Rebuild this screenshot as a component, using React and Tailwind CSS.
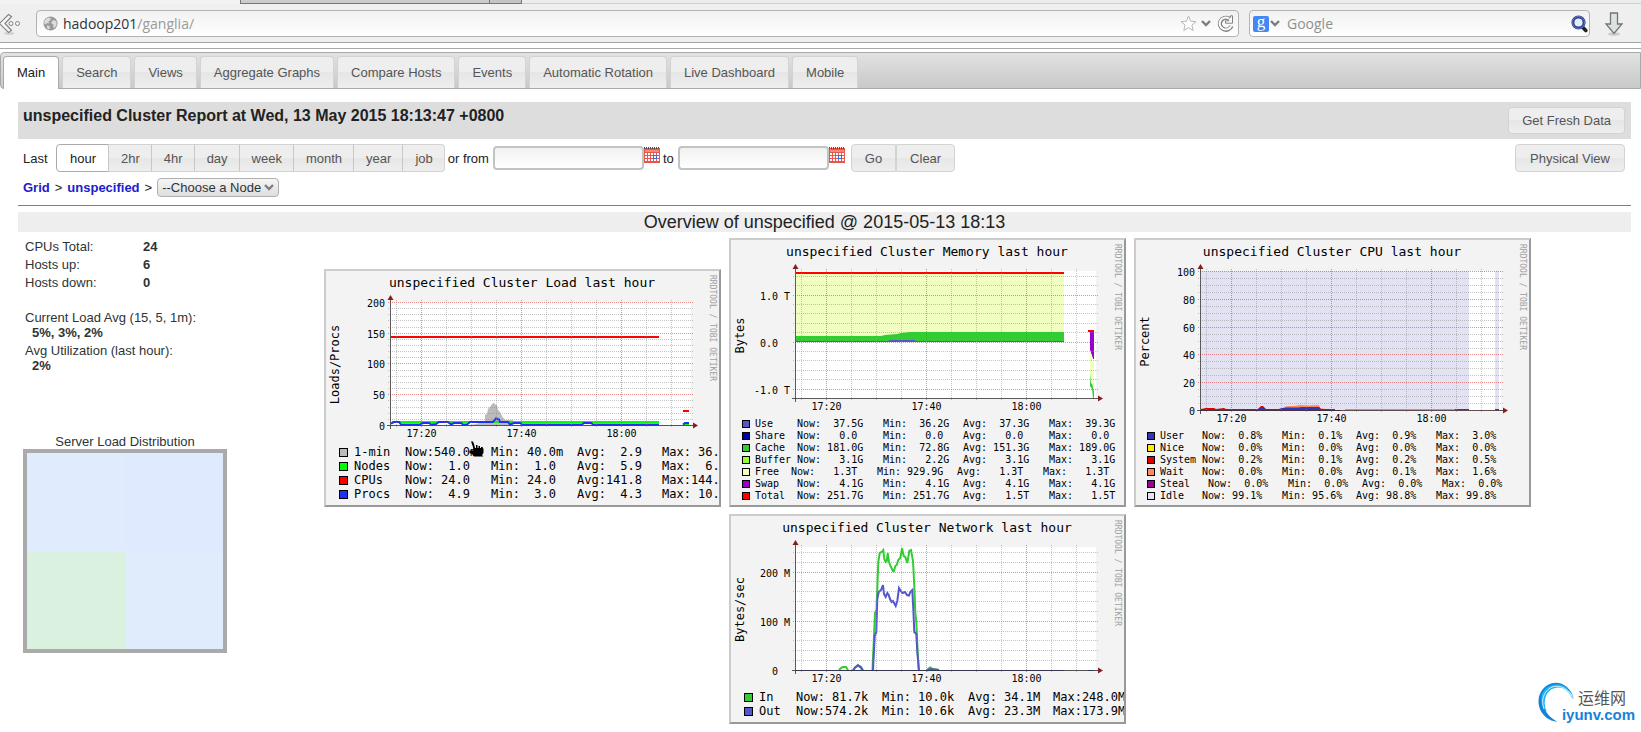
import React from "react";

const TABS = [
  "Main",
  "Search",
  "Views",
  "Aggregate Graphs",
  "Compare Hosts",
  "Events",
  "Automatic Rotation",
  "Live Dashboard",
  "Mobile",
];

const RANGES = ["hour", "2hr", "4hr", "day", "week", "month", "year", "job"];

const X_MINOR = [70.5, 120.5, 145.5, 170.5, 220.5, 245.5, 270.5, 320.5, 345.5];
const X_MAJOR = [
  { x: 95.5, label: "17:20" },
  { x: 195.5, label: "17:40" },
  { x: 295.5, label: "18:00" },
];

const BUTTON =
  "border border-[#d3d3d3] bg-linear-to-b from-[#eeeeee] from-50% via-[#e6e6e6] via-50% to-[#eeeeee] text-[13px] text-[#555555] cursor-pointer";

function GlobeIcon() {
  return (
    <svg width="15" height="15" viewBox="0 0 15 15" className="shrink-0">
      <circle cx="7.5" cy="7.5" r="7" fill="#9a9a9a" />
      <path d="M2 4 L5 1.5 L8 2.5 L7 4.5 L5.5 5.5 L6 7.5 L4 7 L2.5 8.5 L1 7 Z" fill="#dcdcdc" />
      <path d="M8.5 5.5 L11 4 L13.5 5.5 L13.5 9 L11.5 12 L10 11 L10.5 8.5 L8.5 7.5 Z" fill="#dcdcdc" />
      <path d="M4 9.5 L6.5 10 L7 12 L5.5 13.5 L4 12 Z" fill="#dcdcdc" />
    </svg>
  );
}

function BackIcon() {
  return (
    <svg width="21" height="22" viewBox="0 0 21 22" className="shrink-0">
      <ellipse cx="9" cy="20.5" rx="5" ry="1.4" fill="#d2d2d2" />
      <path
        d="M8.5 1.5 L11.5 3.5 L5 10.5 L11.5 17.5 L8.5 19.5 L-0.5 10.5 Z"
        fill="#f7f7f7"
        stroke="#848484"
        strokeWidth="1.2"
      />
      <circle cx="11" cy="10.5" r="2" fill="#f7f7f7" stroke="#848484" />
      <circle cx="17.5" cy="10.5" r="2" fill="#f7f7f7" stroke="#848484" />
    </svg>
  );
}

function StarIcon() {
  return (
    <svg width="17" height="17" viewBox="0 0 17 17">
      <path
        d="M8.5 1 L10.6 6.2 L16 6.6 L11.9 10.1 L13.2 15.6 L8.5 12.6 L3.8 15.6 L5.1 10.1 L1 6.6 L6.4 6.2 Z"
        fill="#fdfdfd"
        stroke="#b9b9b9"
      />
    </svg>
  );
}

function ChevronIcon() {
  return (
    <svg width="10" height="7" viewBox="0 0 10 7">
      <path d="M1 1 L5 5 L9 1" fill="none" stroke="#7d7d7d" strokeWidth="2.4" />
    </svg>
  );
}

function ReloadIcon() {
  return (
    <svg width="17" height="17" viewBox="0 0 17 17">
      <path d="M14.5 11 A6 6 0 1 1 12 3.6" fill="none" stroke="#808080" strokeWidth="4.2" />
      <path d="M15.5 0.8 V8.2 H8.5 V5.8 H12 L11 3.5 L13.4 2.8 V0.8 Z" fill="#ffffff" stroke="#808080" />
      <path d="M14.2 10.8 A6 6 0 1 1 12 3.6" fill="none" stroke="#ffffff" strokeWidth="2" />
    </svg>
  );
}

function MagnifierIcon() {
  return (
    <svg width="17" height="18" viewBox="0 0 17 18">
      <path d="M11 11.5 L14.8 15.5" stroke="#222222" strokeWidth="3.6" strokeLinecap="round" />
      <circle cx="7.5" cy="7.5" r="5.6" fill="#e6ecf8" stroke="#2f3f8f" strokeWidth="3" />
      <circle cx="7.5" cy="7.5" r="6" fill="none" stroke="#6f86cc" strokeWidth="0.8" />
    </svg>
  );
}

function DownloadIcon() {
  return (
    <svg width="20" height="24" viewBox="0 0 20 24">
      <ellipse cx="10" cy="22" rx="6" ry="1.8" fill="#cccccc" />
      <path
        d="M6.5 1 H13.5 V12 H18 L10 21.5 L2 12 H6.5 Z"
        fill="#dde2e2"
        stroke="#727575"
        strokeWidth="1.3"
      />
    </svg>
  );
}

function CalendarIcon() {
  return (
    <svg width="16" height="16" viewBox="0 0 16 16">
      <rect x="0" y="1" width="16" height="15" fill="#e8584a" />
      <path d="M0.5 0 V2 M2.5 0 V2 M4.5 0 V2 M6.5 0 V2 M8.5 0 V2 M10.5 0 V2 M12.5 0 V2 M14.5 0 V2" stroke="#6b4a44" />
      <rect x="1" y="3" width="14" height="2" fill="#f58a7d" />
      {[0, 1, 2].map((row) =>
        [0, 1, 2, 3, 4].map((col) => (
          <rect
            key={`${row}-${col}`}
            x={1 + col * 3}
            y={6 + row * 3}
            width="2"
            height="2"
            fill="#ffffff"
          />
        ))
      )}
      <rect x="9.5" y="8.5" width="3" height="3" fill="#ffffff" stroke="#2f6fe0" />
    </svg>
  );
}

function HandCursor() {
  return (
    <svg
      width="15"
      height="16"
      viewBox="0 0 15 16"
      className="absolute left-[143px] top-[170px]"
    >
      <path
        d="M2 0.5 H4 L5 3 L6 7 H7 V4 H8.5 V7 H9.5 V5 H11 V7 H12 V6 H13.5 L14.5 8 V12 L13 14 L14.5 15.5 H5 L3 13 L0.5 12 V9.5 H4 L4.5 10.5 L4 6 Z"
        fill="#000000"
      />
    </svg>
  );
}

function BrowserBar() {
  return (
    <header className="border-b border-[#a3a3a3] bg-[#efefef]">
      <div className="flex h-1">
        <div className="w-[240px] bg-[#f2f2f2]" />
        <div className="w-[250px] border-x border-b border-[#777777] bg-[#cbcbcb]" />
        <div className="w-[32px] border-r border-b border-[#777777] bg-[#c4c4c4]" />
        <div className="grow border-b border-[#cfcfcf] bg-[#ececec]" />
      </div>
      <div className="flex items-center pt-[6px] pb-[5px] font-['Open_Sans',sans-serif] text-sm">
        <BackIcon />
        <div className="ml-[15px] flex h-[27px] grow items-center rounded border border-[#b3b3b3] bg-linear-to-b from-[#f1f1f1] to-white pr-[2px] pl-[6px]">
          <GlobeIcon />
          <p className="ml-[5px] grow text-[#9a9a9a]">
            <span className="text-[#2e3436]">hadoop201</span>/ganglia/
          </p>
          <button type="button" aria-label="Bookmark" className="mr-1">
            <StarIcon />
          </button>
          <button type="button" aria-label="History" className="mr-[6px]">
            <ChevronIcon />
          </button>
          <button type="button" aria-label="Reload" className="mr-[2px]">
            <ReloadIcon />
          </button>
        </div>
        <div className="ml-[10px] flex h-[27px] w-[341px] items-center rounded border border-[#b3b3b3] bg-linear-to-b from-[#f1f1f1] to-white pr-[1px] pl-[3px]">
          <span className="flex h-4 w-4 items-center justify-center rounded-xs bg-[#4387f5] pb-[3px] font-['Liberation_Serif',serif] text-[17px] text-white">
            g
          </span>
          <button type="button" aria-label="Search engine" className="ml-[1px]">
            <ChevronIcon />
          </button>
          <input
            type="text"
            aria-label="Web search"
            placeholder="Google"
            className="ml-[7px] min-w-0 grow bg-transparent placeholder:text-[#8e9192] outline-none"
          />
          <button type="button" aria-label="Go">
            <MagnifierIcon />
          </button>
        </div>
        <button type="button" aria-label="Downloads" className="mr-[17px] ml-[14px]">
          <DownloadIcon />
        </button>
      </div>
    </header>
  );
}

function TabBar() {
  return (
    <nav className="mt-[3px] flex h-[37px] items-end gap-[3px] rounded-l border border-[#aaaaaa] bg-linear-to-b from-[#e2e2e2] to-[#c9c9c9] pl-[2px]">
      {TABS.map((tab, i) => (
        <a
          key={tab}
          href="#"
          className={
            i === 0
              ? "-mb-px h-[33px] rounded-t border border-b-0 border-[#aaaaaa] bg-white px-[13px] pt-2 text-[13px] text-[#212121]"
              : "h-8 rounded-t border border-b-0 border-[#d3d3d3] bg-linear-to-b from-[#eeeeee] from-50% via-[#e6e6e6] via-50% to-[#eeeeee] px-[13px] pt-2 text-[13px] text-[#555555]"
          }
        >
          {tab}
        </a>
      ))}
    </nav>
  );
}

function DateField({ id, label }) {
  return (
    <>
      <label htmlFor={id} className="pr-1 pl-[3px]">
        {label}
      </label>
      <input
        id={id}
        type="text"
        className="h-6 w-[151px] rounded border-2 border-[#c0c4c3] bg-linear-to-b from-[#f1f1f1] to-white px-1"
      />
      <button type="button" aria-label={`Pick date ${label}`} className="mb-[7px]">
        <CalendarIcon />
      </button>
    </>
  );
}

function Controls() {
  return (
    <form className="mr-[10px] ml-[18px] border-b border-[#808080] pb-2">
      <div className="flex h-[37px] justify-between bg-[#dddddd] pr-[6px] pl-[5px]">
        <h1 className="pt-[2px] text-base font-bold text-[#222222]">
          unspecified Cluster Report at Wed, 13 May 2015 18:13:47 +0800
        </h1>
        <button type="button" className={`${BUTTON} mt-[5px] h-[27px] rounded px-[13px]`}>
          Get Fresh Data
        </button>
      </div>
      <div className="flex h-[33px] items-center pt-[5px] pr-[6px] pl-[5px]">
        <span className="w-[33px]">Last</span>
        <div className="flex" role="group" aria-label="Time range">
          {RANGES.map((range, i) => (
            <button
              key={range}
              type="button"
              className={
                i === 0
                  ? "h-7 rounded-l border border-[#aaaaaa] bg-white pr-[12px] pl-[13px] text-[13px] text-[#212121]"
                  : `${BUTTON} -ml-px h-7 border-l-[#c8c8c8] pr-[11px] pl-[12px] last:rounded-r`
              }
            >
              {range}
            </button>
          ))}
        </div>
        <DateField id="from" label="or from" />
        <DateField id="to" label="to" />
        <button type="button" className={`${BUTTON} ml-[6px] h-7 rounded-l px-[13px]`}>
          Go
        </button>
        <button type="button" className={`${BUTTON} h-7 rounded-r px-[13px]`}>
          Clear
        </button>
        <button type="button" className={`${BUTTON} ml-auto h-7 rounded px-[14px]`}>
          Physical View
        </button>
      </div>
      <div className="mt-[6px] flex h-[19px] items-center gap-[5px] pl-[5px]">
        <a href="#" className="font-bold text-[#2020cc]">
          Grid
        </a>
        <span>&gt;</span>
        <a href="#" className="font-bold text-[#2020cc]">
          unspecified
        </a>
        <span>&gt;</span>
        <div className="relative">
          <select
            aria-label="Node"
            className="block h-[19px] w-[122px] appearance-none rounded border border-[#b0b0b0] bg-linear-to-b from-[#f6f6f6] to-[#dedede] pl-1 text-[13px] leading-[15px] text-[#2e3436]"
          >
            <option>--Choose a Node</option>
          </select>
          <span className="pointer-events-none absolute top-0 right-[5px] flex h-[19px] items-center">
            <ChevronIcon />
          </span>
        </div>
      </div>
    </form>
  );
}

function Summary() {
  return (
    <section className="w-[209px] shrink-0 pt-[5px] pl-[5px] text-[#2e3436]">
      <table className="ml-[2px]">
        <tbody>
          <tr className="h-[18px]">
            <th className="w-[118px] text-left font-normal">CPUs Total:</th>
            <td className="font-bold">24</td>
          </tr>
          <tr className="h-[18px]">
            <th className="text-left font-normal">Hosts up:</th>
            <td className="font-bold">6</td>
          </tr>
          <tr className="h-[18px]">
            <th className="text-left font-normal">Hosts down:</th>
            <td className="font-bold">0</td>
          </tr>
        </tbody>
      </table>
      <dl className="mt-[19px] ml-[2px]">
        <dt>Current Load Avg (15, 5, 1m):</dt>
        <dd className="pl-[7px] font-bold">5%, 3%, 2%</dd>
        <dt className="mt-[3px]">Avg Utilization (last hour):</dt>
        <dd className="pl-[7px] font-bold">2%</dd>
      </dl>
      <h3 className="mt-[61px] text-center">Server Load Distribution</h3>
      <div className="grid size-[204px] grid-cols-2 grid-rows-2 border-4 border-[#aaaaaa]">
        <div className="bg-[#e0ebfe]" />
        <div className="bg-[#e0eaff]" />
        <div className="bg-[#daf1e0]" />
        <div className="bg-[#e0ebfb]" />
      </div>
    </section>
  );
}

// Shared frame of every graph: white plot, data, dotted grid, axes and labels.
function Chart({ title, unit, height, top, bottom, major, minor, children }) {
  const middle = (top + bottom) / 2;
  return (
    <svg
      width="393"
      height={height}
      viewBox={`0 0 393 ${height}`}
      className="block font-['DejaVu_Sans_Mono',monospace]"
      role="img"
      aria-label={title}
    >
      <text x="196" y="16" fontSize="13" textAnchor="middle">
        {title}
      </text>
      <rect x="64" y={top} width="301" height={bottom - top} fill="#ffffff" />
      {children}
      <g stroke="#8c8c8c" strokeOpacity="0.5" strokeDasharray="1 1" shapeRendering="crispEdges">
        {X_MINOR.map((x) => (
          <line key={x} x1={x} x2={x} y1={top - 2} y2={bottom + 2} />
        ))}
        {minor.map((y) => (
          <line key={y} x1="62" x2="367" y1={y} y2={y} />
        ))}
      </g>
      <g stroke="#dc4040" strokeOpacity="0.6" strokeDasharray="1 1" shapeRendering="crispEdges">
        {X_MAJOR.map(({ x }) => (
          <line key={x} x1={x} x2={x} y1={top - 2} y2={bottom + 3} />
        ))}
        {major.map(({ y }) => (
          <line key={y} x1="62" x2="367" y1={y} y2={y} />
        ))}
      </g>
      <g stroke="#333333" strokeOpacity="0.8" shapeRendering="crispEdges">
        <line x1="64.5" x2="64.5" y1={top - 4} y2={bottom + 4} />
        <line x1="61" x2="368" y1={bottom + 0.5} y2={bottom + 0.5} />
      </g>
      <path d={`M61.5 ${top - 2} H67.5 L64.5 ${top - 7} Z`} fill="#802020" />
      <path d={`M367 ${bottom - 2.5} V${bottom + 3.5} L372 ${bottom + 0.5} Z`} fill="#802020" />
      <g fontSize="10">
        {major.map(({ y, label, end = 59 }) => (
          <text key={label} x={end} y={y + 4} textAnchor="end">
            {label}
          </text>
        ))}
        {X_MAJOR.map(({ x, label }) => (
          <text key={label} x={x} y={bottom + 12} textAnchor="middle">
            {label}
          </text>
        ))}
      </g>
      <text
        fontSize="12"
        textAnchor="middle"
        transform={`translate(13 ${middle + 1}) rotate(-90)`}
      >
        {unit}
      </text>
      <text fontSize="8" fill="#a0a0a0" transform="translate(384 4) rotate(90)">
        RRDTOOL / TOBI OETIKER
      </text>
    </svg>
  );
}

function Graph({ chart, legend, children }) {
  return (
    <figure className="relative w-[397px] overflow-hidden border-2 border-t-[#cccccc] border-r-[#999999] border-b-[#999999] border-l-[#cccccc] bg-[#f3f3f3] font-['DejaVu_Sans_Mono',monospace] text-black">
      {chart}
      {legend}
      {children}
    </figure>
  );
}

// Large legend: 12px text in 14px rows.
function WideLegend({ rows, nameWidth }) {
  return (
    <table className="mb-1 ml-[13px] w-[420px] table-fixed text-xs leading-[14px] whitespace-pre">
      <colgroup>
        <col className="w-[15px]" />
        <col className={nameWidth} />
        <col className="w-[86px]" />
        <col className="w-[86px]" />
        <col className="w-[85px]" />
        <col />
      </colgroup>
      <tbody>
        {rows.map(({ name, color, cells }) => (
          <tr key={name} className="h-[14px]">
            <td>
              <span className={`block size-[9px] border border-black ${color}`} />
            </td>
            <td>{name}</td>
            {cells.map((cell) => (
              <td key={cell}>{cell}</td>
            ))}
          </tr>
        ))}
      </tbody>
    </table>
  );
}

// Small legend: 10px text in 12px rows.
function CompactLegend({ rows, statWidth, avgWidth }) {
  return (
    <table className="mb-[3px] ml-[11px] w-[380px] table-fixed text-[10px] leading-[12px] whitespace-pre">
      <colgroup>
        <col className="w-[13px]" />
        <col className="w-[36px]" />
        <col className={statWidth} />
        <col className={avgWidth} />
        <col className={statWidth} />
        <col />
      </colgroup>
      <tbody>
        {rows.map(({ name, color, cells }) => (
          <tr key={name} className="h-3">
            <td>
              <span className={`block size-2 border border-black ${color}`} />
            </td>
            <td>{name}</td>
            {cells.map((cell) => (
              <td key={cell}>{cell}</td>
            ))}
          </tr>
        ))}
      </tbody>
    </table>
  );
}

const LOAD_ROWS = [
  { name: "1-min", color: "bg-[#bbbbbb]", cells: ["Now:540.0m", "Min: 40.0m", "Avg:  2.9", "Max: 36.7"] },
  { name: "Nodes", color: "bg-[#00ff00]", cells: ["Now:  1.0", "Min:  1.0", "Avg:  5.9", "Max:  6.0"] },
  { name: "CPUs", color: "bg-[#ff0000]", cells: ["Now: 24.0", "Min: 24.0", "Avg:141.8", "Max:144.0"] },
  { name: "Procs", color: "bg-[#2030f4]", cells: ["Now:  4.9", "Min:  3.0", "Avg:  4.3", "Max: 10.9"] },
];

const MEMORY_ROWS = [
  { name: "Use", color: "bg-[#5555cc]", cells: [" Now:  37.5G", " Min:  36.2G", " Avg:  37.3G", " Max:  39.3G"] },
  { name: "Share", color: "bg-[#0000aa]", cells: [" Now:   0.0", " Min:   0.0", " Avg:   0.0", " Max:   0.0"] },
  { name: "Cache", color: "bg-[#33cc33]", cells: [" Now: 181.0G", " Min:  72.8G", " Avg: 151.3G", " Max: 189.0G"] },
  { name: "Buffer", color: "bg-[#99ff33]", cells: [" Now:   3.1G", " Min:   2.2G", " Avg:   3.1G", " Max:   3.1G"] },
  { name: "Free", color: "bg-[#f0ffc0]", cells: ["Now:   1.3T", "Min: 929.9G", "Avg:   1.3T", "Max:   1.3T"] },
  { name: "Swap", color: "bg-[#9900cc]", cells: [" Now:   4.1G", " Min:   4.1G", " Avg:   4.1G", " Max:   4.1G"] },
  { name: "Total", color: "bg-[#ff0000]", cells: [" Now: 251.7G", " Min: 251.7G", " Avg:   1.5T", " Max:   1.5T"] },
];

const CPU_ROWS = [
  { name: "User", color: "bg-[#3333bb]", cells: [" Now:  0.8%", " Min:  0.1%", " Avg:  0.9%", " Max:  3.0%"] },
  { name: "Nice", color: "bg-[#ffea00]", cells: [" Now:  0.0%", " Min:  0.0%", " Avg:  0.0%", " Max:  0.0%"] },
  { name: "System", color: "bg-[#dd0000]", cells: [" Now:  0.2%", " Min:  0.1%", " Avg:  0.2%", " Max:  0.5%"] },
  { name: "Wait", color: "bg-[#ff8a60]", cells: [" Now:  0.0%", " Min:  0.0%", " Avg:  0.1%", " Max:  1.6%"] },
  { name: "Steal", color: "bg-[#990099]", cells: ["  Now:  0.0%", "  Min:  0.0%", "  Avg:  0.0%", "  Max:  0.0%"] },
  { name: "Idle", color: "bg-[#e2e2f2]", cells: [" Now: 99.1%", " Min: 95.6%", " Avg: 98.8%", " Max: 99.8%"] },
];

const NETWORK_ROWS = [
  { name: "In", color: "bg-[#33cc33]", cells: ["Now: 81.7k", "Min: 10.0k", "Avg: 34.1M", "Max:248.0M"] },
  { name: "Out", color: "bg-[#5555cc]", cells: ["Now:574.2k", "Min: 10.6k", "Avg: 23.3M", "Max:173.9M"] },
];

function LoadGraph() {
  return (
    <Graph
      chart={
        <Chart
          title="unspecified Cluster Load last hour"
          unit="Loads/Procs"
          height={174}
          top={31}
          bottom={154}
          major={[
            { y: 31.5, label: "200" },
            { y: 62.5, label: "150" },
            { y: 92.5, label: "100" },
            { y: 123.5, label: "50" },
            { y: 154.5, label: "0" },
          ]}
          minor={[37.5, 43.5, 49.5, 56.5, 68.5, 74.5, 80.5, 86.5, 99.5, 105.5, 111.5, 117.5, 129.5, 136.5, 142.5, 148.5]}
        >
          <path
            d="M144 154 L150 153 L157 151 L159 150 V144 L161 143 L162 138 L164 136 L166 133 L168 132 L170 134 L171 134 L172 139 L174 141 L176 145 L179 149 L187 149 V154 Z"
            fill="#bbbbbb"
          />
          <path d="M66 151 H333 M358 153 H363" stroke="#00ff00" strokeWidth="2" />
          <path d="M144 151 H168" stroke="#bbbbbb" strokeWidth="2" />
          <path
            d="M65 152.5 L68 151 H73 L75 153.5 H94 L97 152 H103 L105 153.5 L110 153 L113 151 H122 L125 153.5 L128 152 H135 L137 153.5 H141 L144 151 H167 L170 147.5 L173 148.5 L174 151 H182 L184 153.5 L188 152 L194 152 L196 153.5 H256 L258 152 H265 L267 153.5 H333 M357 153.5 L359 152 H363"
            fill="none"
            stroke="#2030f4"
            strokeWidth="2"
          />
          <path d="M65 66 H333 M357 140 H363" stroke="#ff0000" strokeWidth="2" />
        </Chart>
      }
      legend={<WideLegend rows={LOAD_ROWS} nameWidth="w-[51px]" />}
    >
      <HandCursor />
    </Graph>
  );
}

function MemoryGraph() {
  return (
    <Graph
      chart={
        <Chart
          title="unspecified Cluster Memory last hour"
          unit="Bytes"
          height={178}
          top={31}
          bottom={158}
          major={[
            { y: 55.5, label: "1.0 T" },
            { y: 102.5, label: "0.0", end: 47 },
            { y: 149.5, label: "-1.0 T" },
          ]}
          minor={[36.5, 45.5, 64.5, 73.5, 83.5, 92.5, 111.5, 120.5, 130.5, 139.5]}
        >
          <rect x="65" y="33" width="268" height="69" fill="#f0ffc0" />
          <path
            d="M65 102 V96 H150 L154 95 L166 94 L170 93 L179 92 H333 V102 Z"
            fill="#33cc33"
          />
          <path d="M65 101.5 H333 M158 100.5 H184" stroke="#5555cc" />
          <path d="M65 33 H333 M357 91 H363" stroke="#ff0000" strokeWidth="2" />
          <path d="M359 92 H363 V119 H362 L359 110 Z" fill="#9900cc" />
          <path d="M359 110 L362 119 H363 V152 L361 147 L359 133 Z" fill="#f0ffc0" />
          <path d="M359 133 L360 144 L361 143 L363 152 V158 H362 L361 149 L359 146 Z" fill="#33cc33" />
        </Chart>
      }
      legend={<CompactLegend rows={MEMORY_ROWS} statWidth="w-[86px]" avgWidth="w-[80px]" />}
    />
  );
}

function CpuGraph() {
  return (
    <Graph
      chart={
        <Chart
          title="unspecified Cluster CPU last hour"
          unit="Percent"
          height={190}
          top={31}
          bottom={170}
          major={[
            { y: 31.5, label: "100" },
            { y: 59.5, label: "80" },
            { y: 87.5, label: "60" },
            { y: 114.5, label: "40" },
            { y: 142.5, label: "20" },
            { y: 170.5, label: "0" },
          ]}
          minor={[38.5, 45.5, 52.5, 66.5, 73.5, 80.5, 94.5, 101.5, 108.5, 121.5, 128.5, 135.5, 149.5, 156.5, 163.5]}
        >
          <rect x="65" y="31" width="268" height="139" fill="#e2e2f2" />
          <rect x="359" y="31" width="4" height="139" fill="#e2e2f2" />
          <path
            d="M145 170 L148 167 L152 166 H158 L164 165 L171 165.5 L183 165 L184 168 L190 169 H199 V170 Z"
            fill="#ff8a60"
          />
          <path
            d="M65 170 V169 L70 168 L78 168 L80 169 L88 168 L90 169 H122 L125 166 L127 166 L130 169 H144 L150 167.5 H162 L166 167 H183 L185 169 H199 V170 Z"
            fill="#dd0000"
          />
          <path
            d="M65 170 V169 H122 L125 167 L127 167 L130 169.5 H141 L146 168 H170 L174 167 H183 L185 169.5 H199 V170 Z"
            fill="#3333bb"
          />
          <path d="M65 170.5 H205" stroke="#3333bb" />
          <path d="M209 169.5 H319" stroke="#dd0000" strokeOpacity="0.4" />
          <path d="M319 169.5 H333 M359 169.5 H363" stroke="#3333bb" />
        </Chart>
      }
      legend={<CompactLegend rows={CPU_ROWS} statWidth="w-[80px]" avgWidth="w-[74px]" />}
    />
  );
}

function NetworkGraph() {
  return (
    <Graph
      chart={
        <Chart
          title="unspecified Cluster Network last hour"
          unit="Bytes/sec"
          height={174}
          top={31}
          bottom={154}
          major={[
            { y: 56.5, label: "200 M" },
            { y: 105.5, label: "100 M" },
            { y: 154.5, label: "0", end: 47 },
          ]}
          minor={[36.5, 46.5, 65.5, 75.5, 85.5, 95.5, 115.5, 124.5, 134.5, 144.5]}
        >
          <path
            d="M108 154 L110 152 L112 151 H115 L117 154 M122 154 L125 151 L127 149 L130 152 L131 154 M141.5 154 L144 97 L145.5 94 L147.3 46 L148.7 37 L150.7 36 L152.3 34 L153.3 43 L154.7 46 L155.7 45 L156.7 37 L158 46 L160 51 L162 55 L163 55 L164.3 50 L165.7 49 L167.3 44 L169.3 42 L171 32.3 L172.7 40 L174.3 41 L176.3 47 L178.3 35 L180 34 L182 45 L183.3 70 L184.3 96 L185.3 106 L186.7 136 L187.7 154 M196 154 L199 151.5 L202 153 L208 154"
            fill="none"
            stroke="#33cc33"
            strokeWidth="2"
          />
          <path
            d="M122 154.5 L124 151.5 L127 149.5 L130 151 L132 154.5 M142 154.5 L143.7 120 L145.3 116 L146.3 83 L147.7 76 L150 74 L152 69 L153 78 L154.7 81 L156.3 77 L157.7 79 L159 83 L160.7 86 L162 85 L164.7 90 L166.3 85 L168 72 L169.7 75 L171.7 77 L174 76 L176 79 L178 79.5 L179.3 76 L181.3 74 L182.3 93 L183.3 116 L185.3 118 L186.3 136 L188 154.5 M196 154.5 L199 153 L208 154"
            fill="none"
            stroke="#5555cc"
            strokeWidth="2"
          />
          <path d="M65 154.5 H333 M357 154.5 H363" stroke="#3333aa" />
        </Chart>
      }
      legend={<WideLegend rows={NETWORK_ROWS} nameWidth="w-[37px]" />}
    />
  );
}

function Watermark() {
  return (
    <div className="absolute right-[6px] bottom-[9px] flex items-end">
      <svg width="40" height="41" viewBox="0 0 40 41" className="-mr-4">
        <path
          d="M36 17.7 C33 4 22 -1.5 13 1.5 C3 5 -1 15 1 24 C3 33 11 39.5 19.7 39.7 C12 36 6 30 6 21 C6 9 13 4 20 4 C28 4.5 33.5 10 36 17.7 Z"
          fill="#1383d8"
        />
        <path
          d="M35 18 C31 7 22 3 14 7 C6 12 5 22 9 30 C4 26 2 18 4 12 C8 3 18 0 26 4 C31 7 34 12 35 18 Z"
          fill="#22b1f0"
        />
        <path d="M34 14 C29 5 19 2 12 6 C5 11 3 19 6 27" fill="none" stroke="#ffffff" strokeWidth="0.8" />
      </svg>
      <div className="flex flex-col items-end">
        <span className="mr-[9px] font-['Noto_Sans_CJK_SC',sans-serif] text-base leading-[20px] text-[#555555]">
          运维网
        </span>
        <span className="text-[15px] leading-4 font-bold text-[#1583d8]">iyunv.com</span>
      </div>
    </div>
  );
}

export default function App() {
  return (
    <div className="relative min-h-screen overflow-hidden bg-white font-['Liberation_Sans',Arial,sans-serif] text-[13px] leading-[15px] text-[#222222]">
      <BrowserBar />
      <div className="mt-[5px] border-t border-[#aaaaaa]">
        <TabBar />
      </div>
      <main className="pt-[13px]">
        <Controls />
        <div className="mt-[6px] mr-[10px] ml-[18px]">
          <h2 className="bg-[#eeeeee] text-center text-lg leading-[20px] text-[#222222]">
            Overview of unspecified @ 2015-05-13 18:13
          </h2>
          <div className="flex items-start">
            <Summary />
            <section className="mt-[6px] flex grow flex-wrap items-end justify-center gap-x-2 gap-y-[7px] pr-[3px]">
              <LoadGraph />
              <MemoryGraph />
              <CpuGraph />
              <NetworkGraph />
            </section>
          </div>
        </div>
      </main>
      <Watermark />
    </div>
  );
}
